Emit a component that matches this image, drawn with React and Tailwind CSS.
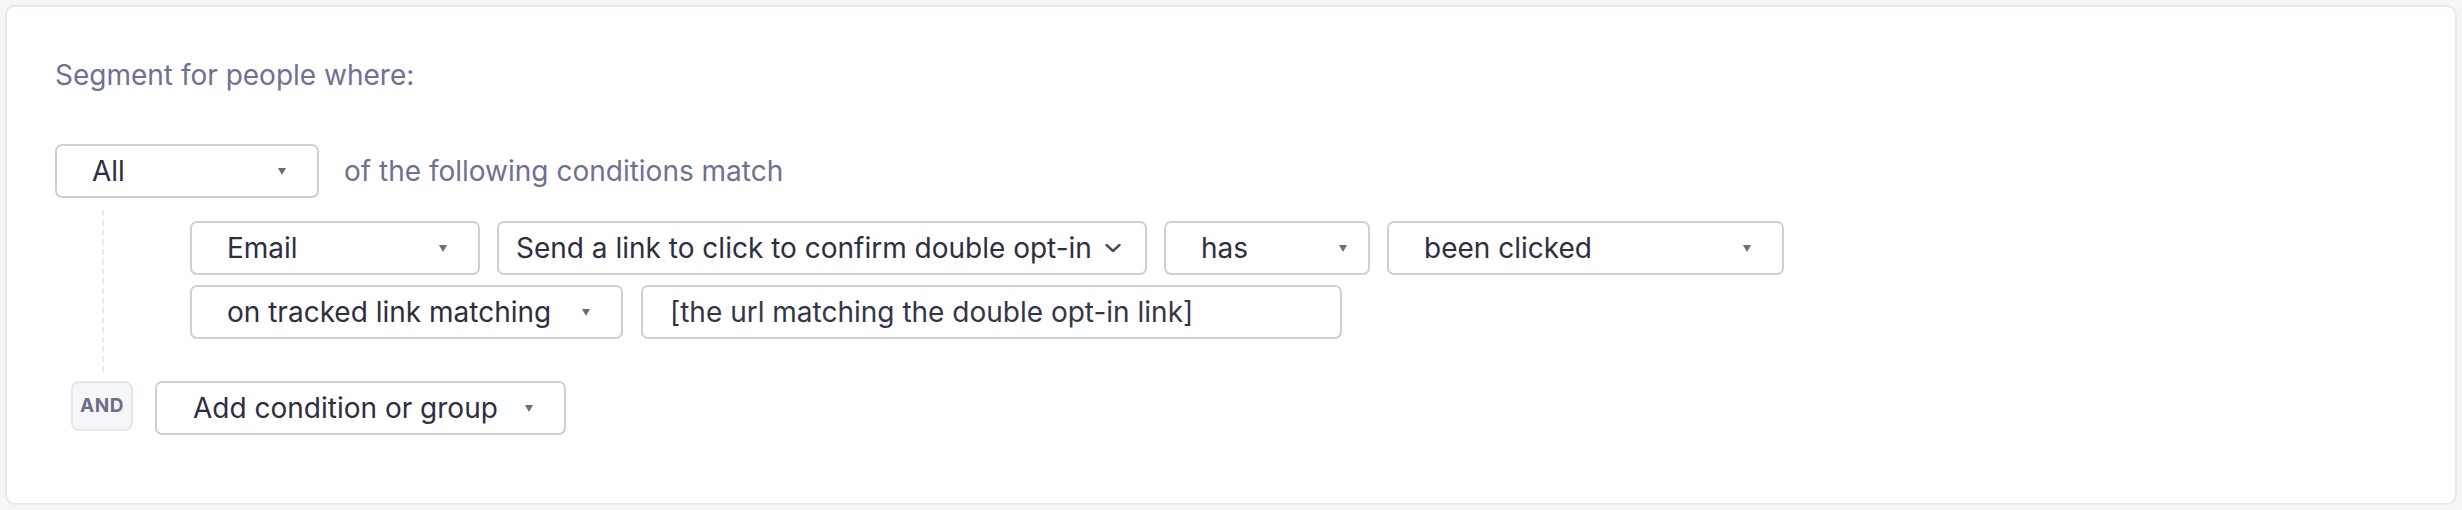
import React from "react";

const Caret = () => (
  <svg width="10" height="8" viewBox="0 0 10 8" className="shrink-0">
    <polygon points="1,1 9,1 5,8" fill="#6b6c82" />
  </svg>
);

const Chevron = () => (
  <svg width="16" height="8" viewBox="0 0 16 8" className="shrink-0">
    <polyline points="1.5,1 8,7 14.5,1" fill="none" stroke="#4a4b62" strokeWidth="2.4" strokeLinecap="round" strokeLinejoin="round" />
  </svg>
);

const Select = ({ label, width, pl = "pl-[35px]", pr = "pr-[30px]", icon = <Caret /> }) => (
  <div
    className={`flex h-[54px] shrink-0 items-center justify-between rounded-[7px] border-2 border-[#cfcedd] bg-white ${pl} ${pr} text-[#2e2e43]`}
    style={{ width }}
  >
    <span className="whitespace-nowrap">{label}</span>
    {icon}
  </div>
);

export default function App() {
  return (
    <div
      className="min-h-[510px] w-full bg-[#f5f6f8] p-[5px] text-[28px] leading-[34px]"
      style={{ fontFamily: "Inter, 'Noto Sans', sans-serif" }}
    >
      <div className="h-[500px] rounded-[10px] border-2 border-[#e8e8ee] bg-white pl-[48px] pt-[51px]">
        <p className="text-[#6e7191]">Segment for people where:</p>

        <div className="mt-[52px] flex items-center">
          <Select label="All" width={264} />
          <span className="ml-[25px] text-[#6e7191]">of the following conditions match</span>
        </div>

        <div className="ml-[47px] mt-[12px] border-l-2 border-dashed border-[#e9e9ee] pb-[33px] pl-[86px] pt-[11px]">
          <div className="flex gap-[17px]">
            <Select label="Email" width={290} />
            <Select
              label="Send a link to click to confirm double opt-in"
              width={650}
              pl="pl-[17px]"
              pr="pr-[24px]"
              icon={<Chevron />}
            />
            <Select label="has" width={206} pr="pr-[20px]" />
            <Select label="been clicked" width={397} />
          </div>
          <div className="mt-[10px] flex gap-[18px]">
            <Select label="on tracked link matching" width={433} />
            <div className="flex h-[54px] w-[701px] items-center rounded-[7px] border-2 border-[#cfcedd] bg-white pl-[27px] text-[#34354a]">
              [the url matching the double opt-in link]
            </div>
          </div>
        </div>

        <div className="ml-[16px] mt-[9px] flex items-start gap-[22px]">
          <div className="flex h-[50px] w-[62px] items-center justify-center rounded-[8px] border-2 border-[#e6e7ed] bg-[#f5f6f9] text-[19px] font-bold tracking-[0.5px] text-[#6b6e86]">
            AND
          </div>
          <Select label="Add condition or group" width={411} pl="pl-[36px]" />
        </div>
      </div>
    </div>
  );
}
